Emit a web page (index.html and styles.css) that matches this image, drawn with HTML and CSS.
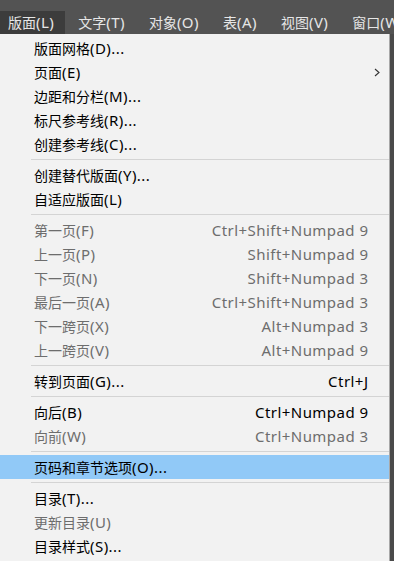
FILE: index.html
```html
<!DOCTYPE html>
<html lang="zh">
<head>
<meta charset="utf-8">
<link rel="stylesheet" href="styles.css">
</head>
<body>
<div class="menubar">
  <div class="mb-item active">版面<span class="l">(L)</span></div>
  <div class="mb-item">文字<span class="l">(T)</span></div>
  <div class="mb-item">对象<span class="l">(O)</span></div>
  <div class="mb-item">表<span class="l">(A)</span></div>
  <div class="mb-item">视图<span class="l">(V)</span></div>
  <div class="mb-item">窗口<span class="l">(W)</span></div>
</div>
<div class="menu">
  <div class="row"><span class="label">版面网格<span class="l">(D)...</span></span></div>
  <div class="row"><span class="label">页面<span class="l">(E)</span></span><svg class="chev" width="6" height="9" viewBox="0 0 6 9"><path d="M1 1 L5 4.5 L1 8" fill="none" stroke="#333" stroke-width="1.1"/></svg></div>
  <div class="row"><span class="label">边距和分栏<span class="l">(M)...</span></span></div>
  <div class="row"><span class="label">标尺参考线<span class="l">(R)...</span></span></div>
  <div class="row"><span class="label">创建参考线<span class="l">(C)...</span></span></div>
  <div class="sep"></div>
  <div class="row"><span class="label">创建替代版面<span class="l">(Y)...</span></span></div>
  <div class="row"><span class="label">自适应版面<span class="l">(L)</span></span></div>
  <div class="sep"></div>
  <div class="row dis"><span class="label">第一页<span class="l">(F)</span></span><span class="key l">Ctrl+Shift+Numpad 9</span></div>
  <div class="row dis"><span class="label">上一页<span class="l">(P)</span></span><span class="key l">Shift+Numpad 9</span></div>
  <div class="row dis"><span class="label">下一页<span class="l">(N)</span></span><span class="key l">Shift+Numpad 3</span></div>
  <div class="row dis"><span class="label">最后一页<span class="l">(A)</span></span><span class="key l">Ctrl+Shift+Numpad 3</span></div>
  <div class="row dis"><span class="label">下一跨页<span class="l">(X)</span></span><span class="key l">Alt+Numpad 3</span></div>
  <div class="row dis"><span class="label">上一跨页<span class="l">(V)</span></span><span class="key l">Alt+Numpad 9</span></div>
  <div class="sep"></div>
  <div class="row"><span class="label">转到页面<span class="l">(G)...</span></span><span class="key l">Ctrl+J</span></div>
  <div class="sep"></div>
  <div class="row"><span class="label">向后<span class="l">(B)</span></span><span class="key l">Ctrl+Numpad 9</span></div>
  <div class="row dis"><span class="label">向前<span class="l">(W)</span></span><span class="key l">Ctrl+Numpad 3</span></div>
  <div class="sep"></div>
  <div class="row hl"><span class="label">页码和章节选项<span class="l">(O)...</span></span></div>
  <div class="sep"></div>
  <div class="row"><span class="label">目录<span class="l">(T)...</span></span></div>
  <div class="row dis"><span class="label">更新目录<span class="l">(U)</span></span></div>
  <div class="row"><span class="label">目录样式<span class="l">(S)...</span></span></div>
</div>
</body>
</html>
```
FILE: styles.css
```css
html, body {
  margin: 0;
  padding: 0;
}
body {
  background: #4a4a4a;
  font-family: "Noto Sans", "Noto Sans CJK SC", sans-serif;
  font-size: 14px;
  width: 394px;
  height: 561px;
  overflow: hidden;
}
.l {
  font-size: 15px;
  letter-spacing: 0.45px;
}
.menubar {
  height: 34px;
  background: #535353;
  display: flex;
  align-items: flex-end;
  white-space: nowrap;
}
.mb-item {
  height: 23px;
  line-height: 23px;
  padding: 0 11px 0 13px;
  color: #e6e6e6;
}
.mb-item.active {
  background: #3c3c3c;
  padding: 0 11px 0 8px;
}
.menu {
  width: 389px;
  background: #f2f2f2;
  border-right: 1px solid #a8a8a8;
  padding-top: 2px;
  height: 525px;
}
.row {
  height: 24px;
  display: flex;
  align-items: center;
  justify-content: space-between;
  padding: 0 21px 0 34px;
  color: #000;
  white-space: nowrap;
}
.row.dis {
  color: #6d6d6d;
}
.row.hl {
  background: #91c9f7;
}
.key {
  margin-right: -0.45px;
}
.chev {
  margin-right: -12px;
}
.sep {
  height: 7px;
  display: flex;
  align-items: center;
  padding-left: 31px;
}
.sep::before {
  content: "";
  display: block;
  height: 1px;
  width: 100%;
  background: #d4d4d4;
}
```
